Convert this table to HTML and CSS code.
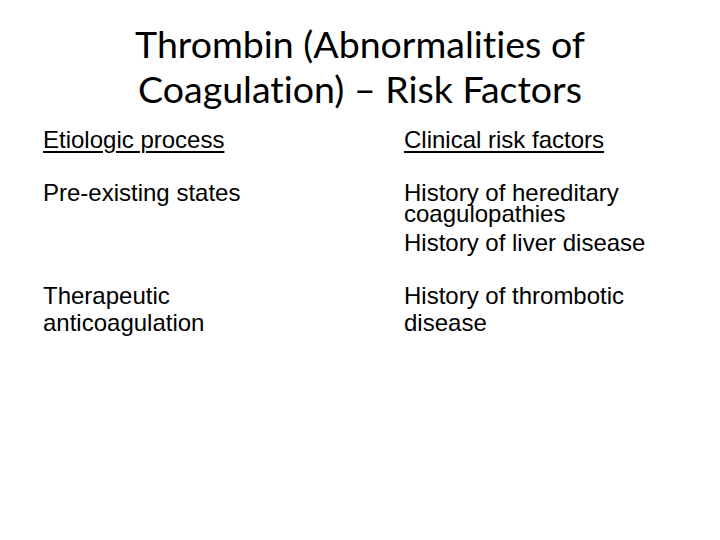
FILE: index.html
```html
<!DOCTYPE html>
<html>
<head>
<meta charset="utf-8">
<link rel="stylesheet" href="styles.css">
</head>
<body>
<div class="slide">
  <h1 class="title">Thrombin (Abnormalities of<br>Coagulation) – Risk Factors</h1>
  <div class="table">
    <div class="cell head"><span class="ul">Etiologic process</span></div>
    <div class="cell head"><span class="ul">Clinical risk factors</span></div>
    <div class="cell"><p>Pre-existing states</p></div>
    <div class="cell">
      <p class="tight">History of hereditary<br>coagulopathies</p>
      <p class="after">History of liver disease</p>
    </div>
    <div class="cell"><p>Therapeutic<br>anticoagulation</p></div>
    <div class="cell"><p>History of thrombotic<br>disease</p></div>
  </div>
</div>
</body>
</html>
```
FILE: styles.css
```css
html, body {
  margin: 0;
  padding: 0;
  background: #fff;
}
.slide {
  width: 720px;
  height: 540px;
  overflow: hidden;
  background: #fff;
  color: #000;
}
.title {
  margin: 0;
  padding-top: 21px;
  text-align: center;
  font-family: Lato, "Open Sans", sans-serif;
  font-weight: 400;
  font-size: 37.5px;
  line-height: 45px;
  font-variant-ligatures: none;
  font-feature-settings: "liga" 0, "clig" 0;
}
.table {
  display: grid;
  grid-template-columns: 361px 1fr;
  row-gap: 26px;
  padding-left: 43px;
  margin-top: 15px;
  font-family: "Liberation Sans", Arial, sans-serif;
  font-size: 24px;
  line-height: 27px;
}
.cell p {
  margin: 0;
}
.ul {
  text-decoration: underline;
  text-decoration-thickness: 2px;
  text-underline-offset: 3px;
}
.tight {
  line-height: 21px;
  padding-top: 3px;
}
.cell .after {
  margin-top: 5px;
}
```
